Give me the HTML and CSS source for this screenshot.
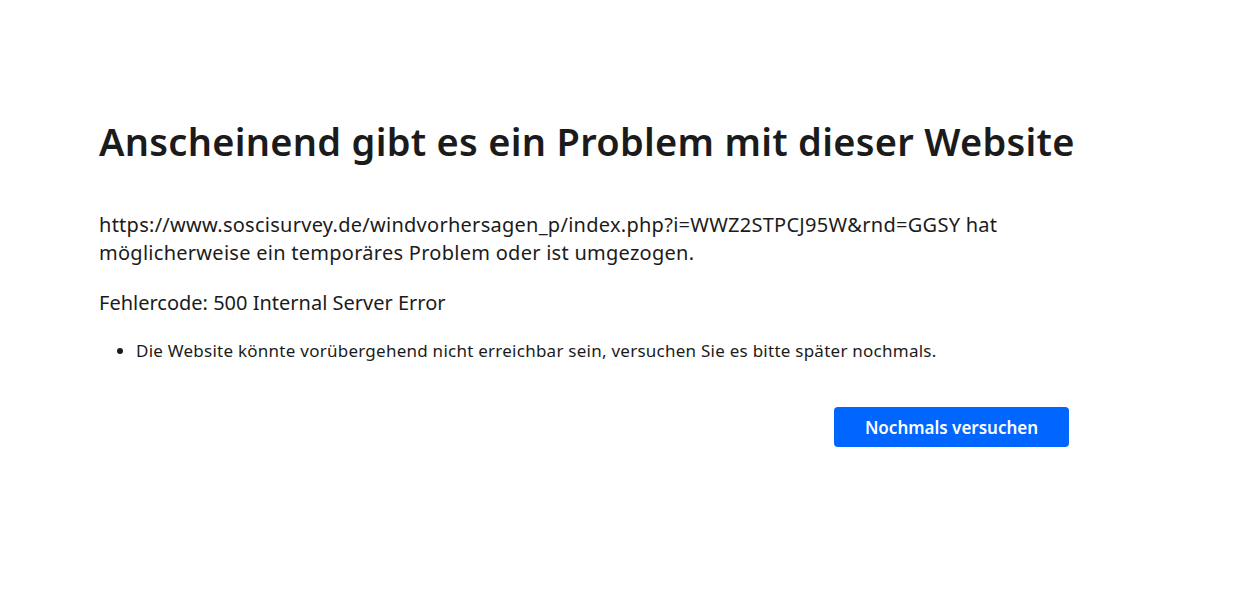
FILE: index.html
```html
<!DOCTYPE html>
<html lang="de">
<head>
<meta charset="utf-8">
<title>Fehler</title>
<link rel="stylesheet" href="styles.css">
</head>
<body>
<main class="page">
  <h1 class="title">Anscheinend gibt es ein Problem mit dieser Website</h1>
  <p class="desc">https://www.soscisurvey.de/windvorhersagen_p/index.php?i=WWZ2STPCJ95W&amp;rnd=GGSY hat möglicherweise ein temporäres Problem oder ist umgezogen.</p>
  <p class="code">Fehlercode: 500 Internal Server Error</p>
  <ul class="tips">
    <li>Die Website könnte vorübergehend nicht erreichbar sein, versuchen Sie es bitte später nochmals.</li>
  </ul>
  <div class="actions">
    <button class="retry">Nochmals versuchen</button>
  </div>
</main>
</body>
</html>
```
FILE: styles.css
```css
html, body {
  margin: 0;
  padding: 0;
  background: #ffffff;
}
body {
  font-family: "Noto Sans", "Open Sans", sans-serif;
  color: #1b1b1b;
}
.page {
  width: 970px;
  padding: 111px 0 0 99px;
}
.title {
  margin: 0;
  font-size: 38px;
  font-weight: 600;
  line-height: 60px;
  white-space: nowrap;
  letter-spacing: 0.28px;
}
.desc {
  margin: 40px 0 0;
  font-size: 20px;
  line-height: 28px;
  letter-spacing: 0.27px;
  width: 930px;
}
.code {
  margin: 22px 0 0;
  font-size: 20px;
  line-height: 28px;
}
.tips {
  margin: 22px 0 0;
  padding-left: 37px;
  font-size: 17px;
  line-height: 24px;
  letter-spacing: 0.25px;
}
.actions {
  display: flex;
  justify-content: flex-end;
  margin-top: 44px;
}
.retry {
  width: 235px;
  height: 40px;
  border: none;
  border-radius: 4px;
  background: #0066ff;
  color: #ffffff;
  font-family: inherit;
  font-size: 17px;
  font-weight: 600;
  cursor: pointer;
}
```
